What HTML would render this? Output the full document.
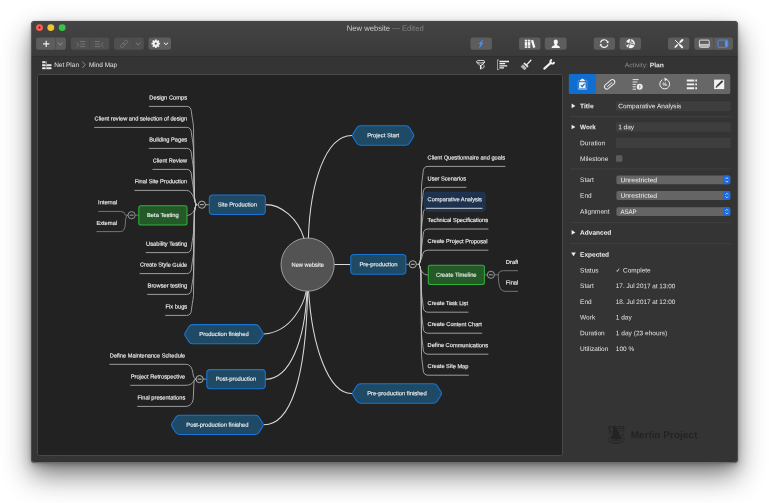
<!DOCTYPE html>
<html><head><meta charset="utf-8"><title>New website</title>
<style>
html,body{margin:0;padding:0;background:#fff;}
body{width:769px;height:503px;overflow:hidden;position:relative;font-family:"Liberation Sans",sans-serif;}
#win{position:absolute;left:31px;top:21px;width:707px;height:442px;border-radius:4px;background:#343434;
 box-shadow:0 13px 28px rgba(0,0,0,.48),0 5px 12px rgba(0,0,0,.16),0 2px 4px rgba(0,0,0,.16),0 0 1px rgba(0,0,0,.45);overflow:hidden;}
#win:after{content:"";position:absolute;left:0;top:0;right:0;bottom:0;border-radius:4px;border:.6px solid rgba(255,255,255,.12);border-bottom:1px solid rgba(255,255,255,.28);border-top:none;pointer-events:none}
#tb{position:absolute;left:0;top:0;width:707px;height:34.9px;background:linear-gradient(#444444,#3a3a3a);border-top:.6px solid #464646;box-shadow:0 0 1.5px rgba(0,0,0,.35);box-sizing:border-box;}
#side{display:none}
#canvas{position:absolute;left:6px;top:53px;width:526px;height:382px;background:#222222;border:.6px solid #484848;border-radius:2.5px;box-sizing:border-box;}
svg{will-change:transform}
svg text{font-family:"Liberation Sans",sans-serif;white-space:pre}
</style></head><body>
<div id="win">
 <div id="tb"></div>
 <div id="side"></div>
 <div id="canvas"></div>
</div>
<svg width="769" height="503" viewBox="0 0 769 503" style="position:absolute;left:0;top:0" font-family='"Liberation Sans",sans-serif'>
<defs><clipPath id="cv"><rect x="38.6" y="75" width="479.4" height="380"/></clipPath></defs>
<circle cx="39.5" cy="27.6" r="3.45" fill="#fc5f58"/>
<circle cx="50.8" cy="27.6" r="3.45" fill="#f0c42e"/>
<circle cx="62.2" cy="27.6" r="3.45" fill="#36c646"/>
<circle cx="39.5" cy="27.6" r="1" fill="#6e1410"/>
<text transform="matrix(1 0.001 0 1 346.7 30.8)" font-size="7.6" fill="#cbcbcb" textLength="77" lengthAdjust="spacingAndGlyphs">New website <tspan fill="#858585">— Edited</tspan></text>
<rect x="36.1" y="37.5" width="29.80" height="12.3" rx="2.2" fill="#5d5d5d"/>
<rect x="70.8" y="37.5" width="38.30" height="12.3" rx="2.2" fill="#4f4f4f"/>
<rect x="114" y="37.5" width="29.80" height="12.3" rx="2.2" fill="#4f4f4f"/>
<rect x="148.5" y="37.5" width="22.50" height="12.3" rx="2.2" fill="#5d5d5d"/>
<rect x="470.4" y="37.5" width="21.50" height="12.3" rx="2.2" fill="#5d5d5d"/>
<rect x="519" y="37.5" width="21.50" height="12.3" rx="2.2" fill="#5d5d5d"/>
<rect x="544.8" y="37.5" width="21.80" height="12.3" rx="2.2" fill="#5d5d5d"/>
<rect x="593.8" y="37.5" width="21.20" height="12.3" rx="2.2" fill="#5d5d5d"/>
<rect x="619.6" y="37.5" width="21.40" height="12.3" rx="2.2" fill="#5d5d5d"/>
<rect x="668" y="37.5" width="21.40" height="12.3" rx="2.2" fill="#5d5d5d"/>
<rect x="694.3" y="37.5" width="38.70" height="12.3" rx="2.2" fill="#5d5d5d"/>
<path d="M55.6,37.5 V49.8" stroke="#444" stroke-width="0.5"/>
<path d="M89.5,37.5 V49.8" stroke="#444" stroke-width="0.5"/>
<path d="M133.4,37.5 V49.8" stroke="#444" stroke-width="0.5"/>
<path d="M713.8,37.5 V49.8" stroke="#444" stroke-width="0.5"/>
<path d="M43.1,43.9 H49.3 M46.2,40.8 V47" stroke="#f4f4f4" stroke-width="1.1" fill="none"/>
<path d="M58.4,43.1 L60.3,44.9 L62.199999999999996,43.1" stroke="#a8a8a8" stroke-width="0.8" fill="none" stroke-linecap="round" stroke-linejoin="round"/>
<path d="M136.29999999999998,43.1 L138.2,44.9 L140.1,43.1" stroke="#8c8c8c" stroke-width="0.8" fill="none" stroke-linecap="round" stroke-linejoin="round"/>
<path d="M164.1,42.9 L166,44.699999999999996 L167.9,42.9" stroke="#f4f4f4" stroke-width="1" fill="none" stroke-linecap="round" stroke-linejoin="round"/>
<path d="M79.8,41.6 H85.3 M80.4,44.1 H85.3 M79.8,46.6 H85.3 M76.5,42.6 L78.8,44.8 L76.5,47" stroke="#7e7e7e" stroke-width="0.8" fill="none"/>
<path d="M94.8,41.6 H100.2 M94.8,44.1 H99.6 M94.8,46.6 H100.2 M103.4,42.6 L101.1,44.8 L103.4,47" stroke="#7e7e7e" stroke-width="0.8" fill="none"/>
<g transform="translate(124,43.9) rotate(-45)" fill="none" stroke="#747474" stroke-width="0.8"><rect x="-4.6" y="-1.5" width="5" height="3" rx="1.5"/><rect x="-0.4" y="-1.5" width="5" height="3" rx="1.5"/></g>
<path d="M158.40,43.70 L160.10,43.70 M157.64,45.54 L158.84,46.74 M155.80,46.30 L155.80,48.00 M153.96,45.54 L152.76,46.74 M153.20,43.70 L151.50,43.70 M153.96,41.86 L152.76,40.66 M155.80,41.10 L155.80,39.40 M157.64,41.86 L158.84,40.66" stroke="#f4f4f4" stroke-width="1.7" fill="none"/>
<circle cx="155.8" cy="43.7" r="2.1" fill="none" stroke="#f4f4f4" stroke-width="2"/>
<path d="M482.6,40.3 L479.3,43.8 L481,43.9 L479.6,47.4 L482.6,43.2 L480.9,43 Z" fill="#4a93ff" stroke="#4a93ff" stroke-width="0.7" stroke-linejoin="round"/>
<g fill="#f4f4f4"><rect x="524.8" y="39.7" width="2.4" height="8.2"/><rect x="527.9" y="39.7" width="2.4" height="8.2"/><path d="M530.9,40.5 L533.1,39.8 L535.4,47.3 L533.2,48 Z"/></g>
<path d="M524.8,41.6 H527.2 M527.9,41.6 H530.3 M524.8,46 H527.2 M527.9,46 H530.3" stroke="#5d5d5d" stroke-width="0.5"/>
<path d="M555.8,39.6 C557.3,39.6 558,40.8 557.8,42.2 C557.7,43.4 557.2,44 556.9,44.6 C556.9,45.6 559.6,45.8 560,47.9 H551.6 C552,45.8 554.7,45.6 554.7,44.6 C554.4,44 553.9,43.4 553.8,42.2 C553.6,40.8 554.3,39.6 555.8,39.6 Z" fill="#f4f4f4"/>
<path d="M600.53,42.62 A3.8,3.8 0 0 1 607.77,42.30 M607.87,44.58 A3.8,3.8 0 0 1 600.63,44.90" stroke="#f4f4f4" stroke-width="1.05" fill="none"/>
<path d="M606.32,42.47 L608.88,41.11 L608.10,43.46 Z M602.08,44.73 L599.52,46.09 L600.30,43.74 Z" fill="#f4f4f4"/>
<circle cx="630.3" cy="43.7" r="4.6" fill="#f4f4f4"/>
<path d="M629.6,43.6 L630.9,39 M629.6,43.6 L635,45.3 M629.6,43.6 L628,48.3" stroke="#5d5d5d" stroke-width="0.9" fill="none"/>
<path d="M629.6,43.6 L625.6,41.6 L626,45.8 Z" fill="#5d5d5d"/>
<path d="M631.4,40.2 L633.8,43.6 L631.2,43.2 Z" fill="#5d5d5d" fill-opacity="0.75"/>
<path d="M675.4,40.4 L682.2,47.2 M682.2,40.2 L675.2,47.2" stroke="#f4f4f4" stroke-width="0.95" fill="none" stroke-linecap="round"/>
<path d="M680.2,45.2 L682.2,47.2 M680.6,41.8 L682.4,40" stroke="#f4f4f4" stroke-width="2" fill="none" stroke-linecap="round"/>
<path d="M675.4,47 L677,45.4" stroke="#f4f4f4" stroke-width="1.6" fill="none" stroke-linecap="round"/>
<rect x="699.4" y="40.1" width="9.8" height="7.2" rx="1" fill="none" stroke="#f4f4f4" stroke-width="0.85"/><path d="M699.4,44.4 H709.2" stroke="#f4f4f4" stroke-width="0.7"/><rect x="700" y="44.8" width="8.6" height="2" fill="#f4f4f4" fill-opacity="0.6"/>
<rect x="717.9" y="40.1" width="9.9" height="7.2" rx="1.2" fill="none" stroke="#4a8df0" stroke-width="0.9"/><rect x="725.2" y="40.8" width="2.1" height="5.8" fill="#5a9bff"/>
<g fill="#e6e6e6"><rect x="42.2" y="61.2" width="3.3" height="2"/><rect x="42.2" y="64.2" width="3.3" height="2"/><rect x="42.2" y="67.2" width="3.3" height="2"/><rect x="47" y="64.2" width="4.4" height="2"/><rect x="47" y="67.2" width="4.4" height="2"/><rect x="45.9" y="61.2" width="0.6" height="8"/><rect x="42.2" y="65" width="9.2" height="0.5"/><rect x="42.2" y="68" width="9.2" height="0.5"/></g>
<text transform="matrix(1 0.001 0 1 54.2 67)" font-size="6.45" fill="#e2e2e2" textLength="24.8" lengthAdjust="spacingAndGlyphs">Net Plan</text>
<path d="M82.4,61.6 L85.2,64.8 L82.4,68" stroke="#bdbdbd" stroke-width="0.6" fill="none"/>
<text transform="matrix(1 0.001 0 1 88.9 67)" font-size="6.45" fill="#e2e2e2" textLength="28.3" lengthAdjust="spacingAndGlyphs">Mind Map</text>
<ellipse cx="480.7" cy="61.7" rx="4.3" ry="1.3" fill="none" stroke="#efefef" stroke-width="0.9"/>
<path d="M476.6,62.2 L480,65.6 M484.8,62.2 L481.4,65.6" stroke="#efefef" stroke-width="0.9" fill="none"/>
<path d="M480.7,65 V69.3" stroke="#efefef" stroke-width="1.5"/>
<path d="M481.4,64.6 A1.9,1.9 0 1 1 481.4,68" fill="none" stroke="#efefef" stroke-width="0.8"/>
<path d="M497.5,59.8 V69.8 M497.3,60 H499 M497.3,69.6 H499" stroke="#c8c8c8" stroke-width="0.7" fill="none"/>
<path d="M499.4,61.5 H509 M499.4,63.7 H505.2 M499.4,65.8 H507.2 M499.4,67.9 H504" stroke="#efefef" stroke-width="1.3" fill="none"/>
<path d="M530.9,60.2 L526.8,64.6" stroke="#efefef" stroke-width="1.3" stroke-linecap="round"/>
<path d="M524.6,62.4 L528.6,66.2 L527.4,67.4 L523.4,63.6 Z" fill="#efefef"/>
<path d="M523,64.2 L526.8,67.9 L524.6,70.2 L520.6,66.8 Z" fill="#b4b4b4"/>
<path d="M544.3,68.6 L551,62.6" stroke="#efefef" stroke-width="2.1" stroke-linecap="round"/>
<path d="M554.1,61.9 A1.9,1.9 0 1 1 552.1,59.9" fill="none" stroke="#efefef" stroke-width="1.8"/>
<text transform="matrix(1 0.001 0 1 624.7 67.2)" font-size="6.5" fill="#8e8e8e" textLength="39.3" lengthAdjust="spacingAndGlyphs">Activity: <tspan fill="#e6e6e6" font-weight="bold">Plan</tspan></text>
<rect x="568.9" y="74.1" width="161.4" height="19.9" rx="1.6" fill="#676767"/>
<path d="M570.4,74.1 H595.8 V94 H570.4 Q568.9,94 568.9,92.5 V75.6 Q568.9,74.1 570.4,74.1 Z" fill="#0f6ed0"/>
<rect x="578" y="80.4" width="9" height="8.6" rx="0.8" fill="none" stroke="#f2f2f2" stroke-width="0.7" stroke-opacity="0.4"/>
<path d="M578.2,89 H586.8" stroke="#f2f2f2" stroke-width="0.8" stroke-opacity="0.8"/>
<path d="M580.2,81.2 V80 L582.4,78.4 L584.6,80 V81.2 Z" fill="#f2f2f2"/>
<rect x="579.1" y="82.2" width="6.4" height="5.9" fill="#f2f2f2"/>
<path d="M580.8,85.1 L582.2,86.6 L584.6,83.7" stroke="#0f5fc4" stroke-width="1.1" fill="none"/>
<g transform="translate(609.6,84.3) rotate(-40)" fill="none" stroke="#ececec" stroke-width="1"><rect x="-6" y="-2.4" width="12" height="4.8" rx="2.4"/><path d="M-3.4,0.3 H3.2" stroke-width="0.9"/></g>
<path d="M632.6,79.6 H638.6 M632.6,82 H637.4 M632.6,84.4 H636.2 M632.6,86.8 H635.8 M632.6,89.2 H636.2" stroke="#e4e4e4" stroke-width="1" fill="none"/>
<circle cx="639.7" cy="86.8" r="3" fill="#f0f0f0"/>
<path d="M639.8,85.2 V88.4" stroke="#676767" stroke-width="0.8"/>
<path d="M666.6,79.5 A4.9,4.9 0 1 1 662.4,79.7" fill="none" stroke="#f0f0f0" stroke-width="1"/>
<path d="M664.4,77.4 L667.4,79.3 L664.8,81.3 Z" fill="#f0f0f0"/>
<text transform="matrix(1 0.001 0 1 664.7 86)" font-size="5" fill="#f0f0f0" font-weight="bold" text-anchor="middle">%</text>
<path d="M686.8,80.5 H694.2 M695.3,80.5 H697" stroke="#f2f2f2" stroke-width="1.9"/>
<path d="M686.8,84.4 H694.2 M695.3,84.4 H697" stroke="#f2f2f2" stroke-width="1.9"/>
<path d="M686.8,88.3 H694.2 M695.3,88.3 H697" stroke="#f2f2f2" stroke-width="1.9"/>
<rect x="714.1" y="79.6" width="10.1" height="9.5" fill="#f2f2f2"/>
<path d="M717.2,86.2 L722.6,80.8" stroke="#3c3c3c" stroke-width="1.9"/>
<path d="M715.6,87.8 L716.2,85.6 L717.8,87.2 Z" fill="#3c3c3c"/>
<path d="M571.6,103.60000000000001 L575.4,105.9 L571.6,108.2 Z" fill="#efefef"/>
<text transform="matrix(1 0.001 0 1 580.1 108.2)" font-size="6.5" fill="#f0f0f0" font-weight="bold" textLength="13.5" lengthAdjust="spacingAndGlyphs">Title</text>
<rect x="616" y="100.9" width="114.7" height="10.10" fill="#3e3e3e"/>
<path d="M616,101.05000000000001 H730.7" stroke="#303030" stroke-width="0.4"/>
<text transform="matrix(1 0.001 0 1 618.2 108.2)" font-size="6.5" fill="#f0f0f0" textLength="63.2" lengthAdjust="spacingAndGlyphs">Comparative Analysis</text>
<path d="M570,116.6 H731" stroke="#484848" stroke-width="0.6"/>
<path d="M571.6,124.7 L575.4,127 L571.6,129.3 Z" fill="#efefef"/>
<text transform="matrix(1 0.001 0 1 580.1 129.3)" font-size="6.5" fill="#f0f0f0" font-weight="bold" textLength="15.8" lengthAdjust="spacingAndGlyphs">Work</text>
<rect x="616" y="121.6" width="114.7" height="10.20" fill="#3e3e3e"/>
<path d="M616,121.75 H730.7" stroke="#303030" stroke-width="0.4"/>
<text transform="matrix(1 0.001 0 1 618.2 129.3)" font-size="6.5" fill="#f0f0f0">1 day</text>
<text transform="matrix(1 0.001 0 1 580.1 145.2)" font-size="6.5" fill="#e4e4e4" textLength="25" lengthAdjust="spacingAndGlyphs">Duration</text>
<rect x="616" y="137.3" width="114.7" height="10.70" fill="#3e3e3e"/>
<path d="M616,137.45000000000002 H730.7" stroke="#303030" stroke-width="0.4"/>
<text transform="matrix(1 0.001 0 1 580.1 161.1)" font-size="6.5" fill="#e4e4e4" textLength="28.3" lengthAdjust="spacingAndGlyphs">Milestone</text>
<rect x="616" y="155.2" width="6.4" height="6.6" rx="1.2" fill="#5c5c5c"/>
<path d="M570,168.9 H731" stroke="#484848" stroke-width="0.6"/>
<text transform="matrix(1 0.001 0 1 580.1 182)" font-size="6.5" fill="#e4e4e4">Start</text>
<rect x="616.4" y="175.4" width="113.9" height="8.90" rx="1.8" fill="#656565"/>
<path d="M723.4,175.4 H728.5 Q730.3,175.4 730.3,177.20000000000002 V182.5 Q730.3,184.3 728.5,184.3 H723.4 Z" fill="#1a6be2"/>
<path d="M725.5,178.95000000000002 L726.85,177.55 L728.2,178.95000000000002 M725.5,180.75000000000003 L726.85,182.15000000000003 L728.2,180.75000000000003" stroke="#fff" stroke-width="0.7" fill="none"/>
<text transform="matrix(1 0.001 0 1 620.4 182.15000000000003)" font-size="6.5" fill="#f0f0f0" textLength="36.7" lengthAdjust="spacingAndGlyphs">Unrestricted</text>
<text transform="matrix(1 0.001 0 1 580.1 197.7)" font-size="6.5" fill="#e4e4e4">End</text>
<rect x="616.4" y="191.1" width="113.9" height="8.90" rx="1.8" fill="#656565"/>
<path d="M723.4,191.1 H728.5 Q730.3,191.1 730.3,192.9 V198.2 Q730.3,200 728.5,200 H723.4 Z" fill="#1a6be2"/>
<path d="M725.5,194.65 L726.85,193.25 L728.2,194.65 M725.5,196.45000000000002 L726.85,197.85000000000002 L728.2,196.45000000000002" stroke="#fff" stroke-width="0.7" fill="none"/>
<text transform="matrix(1 0.001 0 1 620.4 197.85000000000002)" font-size="6.5" fill="#f0f0f0" textLength="36.7" lengthAdjust="spacingAndGlyphs">Unrestricted</text>
<text transform="matrix(1 0.001 0 1 580.1 213.8)" font-size="6.5" fill="#e4e4e4" textLength="29.5" lengthAdjust="spacingAndGlyphs">Alignment</text>
<rect x="616.4" y="207.2" width="113.9" height="8.90" rx="1.8" fill="#656565"/>
<path d="M723.4,207.2 H728.5 Q730.3,207.2 730.3,209.0 V214.29999999999998 Q730.3,216.1 728.5,216.1 H723.4 Z" fill="#1a6be2"/>
<path d="M725.5,210.74999999999997 L726.85,209.34999999999997 L728.2,210.74999999999997 M725.5,212.54999999999998 L726.85,213.95 L728.2,212.54999999999998" stroke="#fff" stroke-width="0.7" fill="none"/>
<text transform="matrix(1 0.001 0 1 620.4 213.95)" font-size="6.5" fill="#f0f0f0" textLength="16.3" lengthAdjust="spacingAndGlyphs">ASAP</text>
<path d="M570,222.4 H731" stroke="#484848" stroke-width="0.6"/>
<path d="M571.6,230.1 L575.4,232.4 L571.6,234.70000000000002 Z" fill="#efefef"/>
<text transform="matrix(1 0.001 0 1 580.1 234.7)" font-size="6.5" fill="#f0f0f0" font-weight="bold" textLength="31.2" lengthAdjust="spacingAndGlyphs">Advanced</text>
<path d="M570,243.6 H731" stroke="#484848" stroke-width="0.6"/>
<path d="M571.2,252.5 H575.8 L573.5,256.3 Z" fill="#efefef"/>
<text transform="matrix(1 0.001 0 1 580.1 256.7)" font-size="6.5" fill="#f0f0f0" font-weight="bold">Expected</text>
<text transform="matrix(1 0.001 0 1 580.1 272.40000000000003)" font-size="6.5" fill="#e4e4e4">Status</text>
<text transform="matrix(1 0.001 0 1 580.1 288.1)" font-size="6.5" fill="#e4e4e4">Start</text>
<text transform="matrix(1 0.001 0 1 615.8 288.1)" font-size="6.5" fill="#e4e4e4" textLength="59.5" lengthAdjust="spacingAndGlyphs">17. Jul 2017 at 13:00</text>
<text transform="matrix(1 0.001 0 1 580.1 303.90000000000003)" font-size="6.5" fill="#e4e4e4">End</text>
<text transform="matrix(1 0.001 0 1 615.8 303.90000000000003)" font-size="6.5" fill="#e4e4e4" textLength="59.5" lengthAdjust="spacingAndGlyphs">18. Jul 2017 at 12:00</text>
<text transform="matrix(1 0.001 0 1 580.1 319.6)" font-size="6.5" fill="#e4e4e4">Work</text>
<text transform="matrix(1 0.001 0 1 615.8 319.6)" font-size="6.5" fill="#e4e4e4">1 day</text>
<text transform="matrix(1 0.001 0 1 580.1 335.3)" font-size="6.5" fill="#e4e4e4">Duration</text>
<text transform="matrix(1 0.001 0 1 615.8 335.3)" font-size="6.5" fill="#e4e4e4" textLength="51.5" lengthAdjust="spacingAndGlyphs">1 day (23 ehours)</text>
<text transform="matrix(1 0.001 0 1 580.1 351.1)" font-size="6.5" fill="#e4e4e4">Utilization</text>
<text transform="matrix(1 0.001 0 1 615.8 351.1)" font-size="6.5" fill="#e4e4e4">100 %</text>
<text transform="matrix(1 0.001 0 1 616.4 272.2)" font-size="5" fill="#e4e4e4" stroke="#e4e4e4" stroke-width="0.14">✓</text>
<text transform="matrix(1 0.001 0 1 623 272.4)" font-size="6.5" fill="#e4e4e4" textLength="27.7" lengthAdjust="spacingAndGlyphs">Complete</text>
<g fill="none" stroke="#232323" stroke-width="0.85"><ellipse cx="616.1" cy="439.9" rx="8.2" ry="3.5"/><path d="M610.6,439.3 C612.6,441.6 619.6,441.6 621.6,439.3"/><path d="M608.4,426.7 H624 M616.5,428.6 H623.6 M623.8,426.7 V432.5 M608.8,427 C609.6,430 609.2,433 610.4,434.6"/></g>
<path d="M611.2,438.6 C612.6,434 613.4,430 613.2,426.2 C616.6,427.4 620,432.6 621,438.6 C618.4,440.2 613.8,440.2 611.2,438.6 Z" fill="#232323"/>
<g fill="#232323"><circle cx="609.8" cy="428.2" r="0.7"/><circle cx="611" cy="431.6" r="0.8"/><circle cx="620.8" cy="431" r="0.8"/><circle cx="622.6" cy="435" r="0.9"/></g>
<text transform="matrix(1 0.001 0 1 630.7 438.2)" font-size="10.1" fill="#232323" font-weight="bold" textLength="66.8" lengthAdjust="spacingAndGlyphs">Merlin Project</text>
<g clip-path="url(#cv)">
<g fill="none" stroke="#c4c4c4" stroke-width="0.75" stroke-linecap="round">
<g stroke="#dadada" stroke-width="1.05">
<path d="M351.7,135.4 C325,135.4 310,185 308.4,238.4"/>
<path d="M265.7,204.6 C281,204.6 298,218 304.2,239"/>
<path d="M334.5,264.5 H350"/>
<path d="M306.3,291 C304,303 292,332 264,334"/>
<path d="M307,291 C305,340 290,379.2 265.6,379.2"/>
<path d="M307.6,291 C306,380 290,424.8 264,424.8"/>
<path d="M308.6,291 C312,345 328,393.5 351.5,393.5"/>
</g>
<path d="M134.8,190.4 H186.5 C191.6,190.4 193.6,197 196.1,204.7"/>
<path d="M149.3,106.4 H186.6 Q191,106.4 191.4,111.4 C191.8,116.4 192.9,120.4 193.5,126.4 L194.4,196.7 Q194.7,202.2 196.1,204.7"/>
<path d="M94.6,127.4 H186.6 Q191,127.4 191.4,132.4 C191.8,137.4 192.9,141.4 193.5,147.4 L194.4,196.7 Q194.7,202.2 196.1,204.7"/>
<path d="M149.2,148.4 H186.6 Q191,148.4 191.4,153.4 C191.8,158.4 192.9,162.4 193.5,168.4 L194.4,196.7 Q194.7,202.2 196.1,204.7"/>
<path d="M152.8,169.4 H186.6 Q191,169.4 191.4,174.4 C191.8,179.4 192.9,183.4 193.5,189.4 L194.4,196.7 Q194.7,202.2 196.1,204.7"/>
<path d="M146.1,252.6 H186.6 Q191,252.6 191.4,247.6 C191.8,242.6 192.9,238.6 193.5,232.6 L194.4,212.7 Q194.7,207.2 196.1,204.7"/>
<path d="M140,273.6 H186.6 Q191,273.6 191.4,268.6 C191.8,263.6 192.9,259.6 193.5,253.60000000000002 L194.4,212.7 Q194.7,207.2 196.1,204.7"/>
<path d="M147.6,294.4 H186.6 Q191,294.4 191.4,289.4 C191.8,284.4 192.9,280.4 193.5,274.4 L194.4,212.7 Q194.7,207.2 196.1,204.7"/>
<path d="M165.6,315.4 H186.6 Q191,315.4 191.4,310.4 C191.8,305.4 192.9,301.4 193.5,295.4 L194.4,212.7 Q194.7,207.2 196.1,204.7"/>
<path d="M187.3,215.4 C192,215.4 194.6,211 196.1,204.7 H198.3"/>
<path d="M205.5,204.7 H209"/>
<path d="M109.8,364.3 H185.5 C190.5,364.3 192,368 192.8,372.5 C193.4,376 194,379.1 196,379.1"/>
<path d="M130.7,385.3 H185 C190,385.3 192.5,383.5 193.5,381.5 C194.2,380 194.8,379.1 196,379.1"/>
<path d="M137.6,406.4 H185.5 C191,406.4 193,402 193.3,398 L193.8,386 C194,381 194.5,379.1 196,379.1"/>
<path d="M203.2,379.1 H206.4"/>
<path d="M505,166.4 H428 Q423.6,166.4 423.2,171.4 C422.8,176.4 421.9,180.4 421.5,186.4 L420.9,256.3 Q420.6,261.8 419.1,264.3"/>
<path d="M466,187.3 H428 Q423.6,187.3 423.2,192.3 C422.8,197.3 421.9,201.3 421.5,207.3 L420.9,256.3 Q420.6,261.8 419.1,264.3"/>
<path d="M482,208.3 H428 Q423.6,208.3 423.2,213.3 C422.8,218.3 421.9,222.3 421.5,228.3 L420.9,256.3 Q420.6,261.8 419.1,264.3"/>
<path d="M488,229.0 H428 Q423.6,229.0 423.2,234.0 C422.8,239.0 421.9,243.0 421.5,249.0 L420.9,256.3 Q420.6,261.8 419.1,264.3"/>
<path d="M488,250.2 H427.6 Q423.4,250.2 422.6,254.2 C421.8,258.2 420.6,261.3 419.1,264.3"/>
<path d="M468,312.2 H428 Q423.6,312.2 423.2,307.2 C422.8,302.2 421.9,298.2 421.5,292.2 L420.9,272.3 Q420.6,266.8 419.1,264.3"/>
<path d="M481.8,333.2 H428 Q423.6,333.2 423.2,328.2 C422.8,323.2 421.9,319.2 421.5,313.2 L420.9,272.3 Q420.6,266.8 419.1,264.3"/>
<path d="M488,354.2 H428 Q423.6,354.2 423.2,349.2 C422.8,344.2 421.9,340.2 421.5,334.2 L420.9,272.3 Q420.6,266.8 419.1,264.3"/>
<path d="M468.4,375.2 H428 Q423.6,375.2 423.2,370.2 C422.8,365.2 421.9,361.2 421.5,355.2 L420.9,272.3 Q420.6,266.8 419.1,264.3"/>
<path d="M416.6,264.3 H419.1 C420.4,270 422.6,275 427.8,275"/>
<path d="M406.4,264.3 H409.2"/>
</g>
<g fill="none" stroke="#9a9a9a" stroke-width="0.7">
<path d="M98.3,211.4 H120.5 Q125,211.4 125.5,215.2 H128"/>
<path d="M96.4,231.6 H120.5 Q125,231.6 125.3,224 Q125.5,215.2 128,215.2"/>
<path d="M135.2,215.2 H138.5"/>
<path d="M484.9,274.8 H487.3"/>
<path d="M494.6,274.8 H498.3 Q498.7,270.7 503.6,270.7 H520"/>
<path d="M498.3,274.8 C498.5,283 499,291.3 505,291.3 H520"/>
</g>
<circle cx="201.9" cy="204.7" r="3.6" fill="#262626" stroke="#c4c4c4" stroke-width="0.85"/>
<path d="M200.0,204.7 H203.8" stroke="#c4c4c4" stroke-width="0.95"/>
<circle cx="131.6" cy="215.2" r="3.6" fill="#262626" stroke="#a0a0a0" stroke-width="0.85"/>
<path d="M129.7,215.2 H133.5" stroke="#a0a0a0" stroke-width="0.95"/>
<circle cx="199.6" cy="379.1" r="3.6" fill="#262626" stroke="#c4c4c4" stroke-width="0.85"/>
<path d="M197.7,379.1 H201.5" stroke="#c4c4c4" stroke-width="0.95"/>
<circle cx="412.8" cy="264.3" r="3.6" fill="#262626" stroke="#c4c4c4" stroke-width="0.85"/>
<path d="M410.90000000000003,264.3 H414.7" stroke="#c4c4c4" stroke-width="0.95"/>
<circle cx="490.9" cy="274.8" r="3.6" fill="#262626" stroke="#a8a8a8" stroke-width="0.85"/>
<path d="M489.0,274.8 H492.79999999999995" stroke="#a8a8a8" stroke-width="0.95"/>
<circle cx="307.6" cy="264.6" r="26.6" fill="#535353" stroke="#b4b4b4" stroke-width="0.8"/>
<text transform="matrix(1 0.001 0 1 291.5 266.7)" font-size="5.8" fill="#f0f0f0" textLength="32.5" lengthAdjust="spacingAndGlyphs" stroke="#f0f0f0" stroke-width="0.14">New website</text>
<rect x="209.3" y="195" width="56.00" height="19.40" rx="3.4" fill="#1e4a65" stroke="#1b74d4" stroke-width="1.05"/>
<text transform="matrix(1 0.001 0 1 237.3 206.5)" font-size="5.8" fill="#f0f0f0" text-anchor="middle" stroke="#f0f0f0" stroke-width="0.14">Site Production</text>
<rect x="206.8" y="369.6" width="58.50" height="19.10" rx="3.4" fill="#1e4a65" stroke="#1b74d4" stroke-width="1.05"/>
<text transform="matrix(1 0.001 0 1 236 380.7)" font-size="5.8" fill="#f0f0f0" text-anchor="middle" stroke="#f0f0f0" stroke-width="0.14">Post-production</text>
<rect x="350.8" y="254.5" width="55.10" height="19.70" rx="3.4" fill="#1e4a65" stroke="#1b74d4" stroke-width="1.05"/>
<text transform="matrix(1 0.001 0 1 378.4 266.2)" font-size="5.8" fill="#f0f0f0" text-anchor="middle" stroke="#f0f0f0" stroke-width="0.14">Pre-production</text>
<rect x="138.8" y="205.7" width="48.20" height="19.30" rx="2" fill="#235a28" stroke="#33b03c" stroke-width="1.05"/>
<text transform="matrix(1 0.001 0 1 162.9 217.1)" font-size="5.8" fill="#f0f0f0" text-anchor="middle" stroke="#f0f0f0" stroke-width="0.14">Beta Testing</text>
<rect x="428.3" y="265.3" width="56.10" height="19.20" rx="2" fill="#235a28" stroke="#33b03c" stroke-width="1.05"/>
<text transform="matrix(1 0.001 0 1 456.3 276.7)" font-size="5.8" fill="#f0f0f0" text-anchor="middle" stroke="#f0f0f0" stroke-width="0.14">Create Timeline</text>
<path d="M353.09,137.27 Q352.00,135.50 353.09,133.73 L356.63,128.01 Q358.00,125.80 360.60,125.80 L405.70,125.80 Q408.30,125.80 409.67,128.01 L413.21,133.73 Q414.30,135.50 413.21,137.27 L409.67,142.99 Q408.30,145.20 405.70,145.20 L360.60,145.20 Q358.00,145.20 356.63,142.99 Z" fill="#1e4a65" stroke="#1b74d4" stroke-width="1.05" stroke-linejoin="round"/>
<text transform="matrix(1 0.001 0 1 383.2 137.3)" font-size="5.8" fill="#f0f0f0" text-anchor="middle" stroke="#f0f0f0" stroke-width="0.14">Project Start</text>
<path d="M185.30,335.96 Q184.20,334.20 185.30,332.44 L188.82,326.80 Q190.20,324.60 192.80,324.60 L255.20,324.60 Q257.80,324.60 259.18,326.80 L262.70,332.44 Q263.80,334.20 262.70,335.96 L259.18,341.60 Q257.80,343.80 255.20,343.80 L192.80,343.80 Q190.20,343.80 188.82,341.60 Z" fill="#1e4a65" stroke="#1b74d4" stroke-width="1.05" stroke-linejoin="round"/>
<text transform="matrix(1 0.001 0 1 224 335.9)" font-size="5.8" fill="#f0f0f0" text-anchor="middle" stroke="#f0f0f0" stroke-width="0.14">Production finished</text>
<path d="M172.11,426.61 Q171.00,424.85 172.11,423.09 L175.62,417.50 Q177.00,415.30 179.60,415.30 L255.20,415.30 Q257.80,415.30 259.18,417.50 L262.69,423.09 Q263.80,424.85 262.69,426.61 L259.18,432.20 Q257.80,434.40 255.20,434.40 L179.60,434.40 Q177.00,434.40 175.62,432.20 Z" fill="#1e4a65" stroke="#1b74d4" stroke-width="1.05" stroke-linejoin="round"/>
<text transform="matrix(1 0.001 0 1 217.4 426.7)" font-size="5.8" fill="#f0f0f0" text-anchor="middle" stroke="#f0f0f0" stroke-width="0.14">Post-production finished</text>
<path d="M353.09,395.27 Q352.00,393.50 353.09,391.73 L356.63,386.01 Q358.00,383.80 360.60,383.80 L433.40,383.80 Q436.00,383.80 437.37,386.01 L440.91,391.73 Q442.00,393.50 440.91,395.27 L437.37,400.99 Q436.00,403.20 433.40,403.20 L360.60,403.20 Q358.00,403.20 356.63,400.99 Z" fill="#1e4a65" stroke="#1b74d4" stroke-width="1.05" stroke-linejoin="round"/>
<text transform="matrix(1 0.001 0 1 397 395.3)" font-size="5.8" fill="#f0f0f0" text-anchor="middle" stroke="#f0f0f0" stroke-width="0.14">Pre-production finished</text>
<rect x="424.4" y="192.2" width="60.8" height="19" rx="3" fill="#1c324e" stroke="#27405f" stroke-width="0.6"/>
<path d="M426,208.3 H482.5" stroke="#d0d0d0" stroke-width="1"/>
<text transform="matrix(1 0.001 0 1 149.3 99.5)" font-size="5.8" fill="#f0f0f0" textLength="37.9" lengthAdjust="spacingAndGlyphs" stroke="#f0f0f0" stroke-width="0.14">Design Comps</text>
<text transform="matrix(1 0.001 0 1 94.6 120.39999999999999)" font-size="5.8" fill="#f0f0f0" textLength="92.6" lengthAdjust="spacingAndGlyphs" stroke="#f0f0f0" stroke-width="0.14">Client review and selection of design</text>
<text transform="matrix(1 0.001 0 1 149.2 141.4)" font-size="5.8" fill="#f0f0f0" textLength="38.0" lengthAdjust="spacingAndGlyphs" stroke="#f0f0f0" stroke-width="0.14">Building Pages</text>
<text transform="matrix(1 0.001 0 1 152.8 162.4)" font-size="5.8" fill="#f0f0f0" textLength="34.4" lengthAdjust="spacingAndGlyphs" stroke="#f0f0f0" stroke-width="0.14">Client Review</text>
<text transform="matrix(1 0.001 0 1 134.8 183.29999999999998)" font-size="5.8" fill="#f0f0f0" textLength="52.4" lengthAdjust="spacingAndGlyphs" stroke="#f0f0f0" stroke-width="0.14">Final Site Production</text>
<text transform="matrix(1 0.001 0 1 146.1 245.7)" font-size="5.8" fill="#f0f0f0" textLength="41.1" lengthAdjust="spacingAndGlyphs" stroke="#f0f0f0" stroke-width="0.14">Usability Testing</text>
<text transform="matrix(1 0.001 0 1 140 266.6)" font-size="5.8" fill="#f0f0f0" textLength="47.2" lengthAdjust="spacingAndGlyphs" stroke="#f0f0f0" stroke-width="0.14">Create Style Guide</text>
<text transform="matrix(1 0.001 0 1 147.6 287.5)" font-size="5.8" fill="#f0f0f0" textLength="39.6" lengthAdjust="spacingAndGlyphs" stroke="#f0f0f0" stroke-width="0.14">Browser testing</text>
<text transform="matrix(1 0.001 0 1 165.6 308.5)" font-size="5.8" fill="#f0f0f0" textLength="21.6" lengthAdjust="spacingAndGlyphs" stroke="#f0f0f0" stroke-width="0.14">Fix bugs</text>
<text transform="matrix(1 0.001 0 1 109.8 357.5)" font-size="5.8" fill="#f0f0f0" textLength="75.4" lengthAdjust="spacingAndGlyphs" stroke="#f0f0f0" stroke-width="0.14">Define Maintenance Schedule</text>
<text transform="matrix(1 0.001 0 1 130.7 378.5)" font-size="5.8" fill="#f0f0f0" textLength="54.5" lengthAdjust="spacingAndGlyphs" stroke="#f0f0f0" stroke-width="0.14">Project Retrospective</text>
<text transform="matrix(1 0.001 0 1 137.6 399.5)" font-size="5.8" fill="#f0f0f0" textLength="47.6" lengthAdjust="spacingAndGlyphs" stroke="#f0f0f0" stroke-width="0.14">Final presentations</text>
<text transform="matrix(1 0.001 0 1 98.1 204.2)" font-size="5.8" fill="#f0f0f0" textLength="19" lengthAdjust="spacingAndGlyphs" stroke="#f0f0f0" stroke-width="0.14">Internal</text>
<text transform="matrix(1 0.001 0 1 96.4 224.9)" font-size="5.8" fill="#f0f0f0" textLength="20.6" lengthAdjust="spacingAndGlyphs" stroke="#f0f0f0" stroke-width="0.14">External</text>
<text transform="matrix(1 0.001 0 1 427.6 159.4)" font-size="5.8" fill="#f0f0f0" textLength="77.4" lengthAdjust="spacingAndGlyphs" stroke="#f0f0f0" stroke-width="0.14">Client Questionnaire and goals</text>
<text transform="matrix(1 0.001 0 1 427.6 180.4)" font-size="5.8" fill="#f0f0f0" textLength="38.4" lengthAdjust="spacingAndGlyphs" stroke="#f0f0f0" stroke-width="0.14">User Scenarios</text>
<text transform="matrix(1 0.001 0 1 427.6 201.29999999999998)" font-size="5.8" fill="#f0f0f0" textLength="54.3" lengthAdjust="spacingAndGlyphs" stroke="#f0f0f0" stroke-width="0.14">Comparative Analysis</text>
<text transform="matrix(1 0.001 0 1 427.6 221.9)" font-size="5.8" fill="#f0f0f0" textLength="60.4" lengthAdjust="spacingAndGlyphs" stroke="#f0f0f0" stroke-width="0.14">Technical Specifications</text>
<text transform="matrix(1 0.001 0 1 427.6 243.1)" font-size="5.8" fill="#f0f0f0" textLength="59.8" lengthAdjust="spacingAndGlyphs" stroke="#f0f0f0" stroke-width="0.14">Create Project Proposal</text>
<text transform="matrix(1 0.001 0 1 427.6 305.1)" font-size="5.8" fill="#f0f0f0" textLength="40.4" lengthAdjust="spacingAndGlyphs" stroke="#f0f0f0" stroke-width="0.14">Create Task List</text>
<text transform="matrix(1 0.001 0 1 427.6 326.1)" font-size="5.8" fill="#f0f0f0" textLength="54.2" lengthAdjust="spacingAndGlyphs" stroke="#f0f0f0" stroke-width="0.14">Create Content Chart</text>
<text transform="matrix(1 0.001 0 1 427.6 347.1)" font-size="5.8" fill="#f0f0f0" textLength="60.4" lengthAdjust="spacingAndGlyphs" stroke="#f0f0f0" stroke-width="0.14">Define Communications</text>
<text transform="matrix(1 0.001 0 1 427.6 368.1)" font-size="5.8" fill="#f0f0f0" textLength="40.8" lengthAdjust="spacingAndGlyphs" stroke="#f0f0f0" stroke-width="0.14">Create Site Map</text>
<text transform="matrix(1 0.001 0 1 505.8 264)" font-size="5.8" fill="#f0f0f0" stroke="#f0f0f0" stroke-width="0.14">Draft</text>
<text transform="matrix(1 0.001 0 1 505.8 284.6)" font-size="5.8" fill="#f0f0f0" stroke="#f0f0f0" stroke-width="0.14">Final</text>
</g>
</svg>
</body></html>
